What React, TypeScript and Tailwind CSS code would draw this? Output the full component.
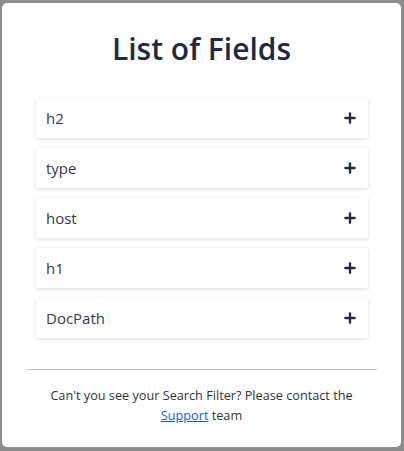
import { Plus } from "lucide-react";

const fields = ["h2", "type", "host", "h1", "DocPath"];

function FieldRow({ name }: { name: string }) {
  return (
    <div className="flex h-10 items-center justify-between bg-white pl-[10px] pr-[10px] shadow-[0_1px_4px_rgba(0,0,0,0.14)]">
      <span className="text-[15px] text-[#333a4d]">{name}</span>
      <Plus size={16} strokeWidth={3.5} className="text-[#1f2a44]" />
    </div>
  );
}

export default function App() {
  return (
    <div
      className="h-[451px] w-[404px] bg-[#8d8d8d] pl-[2px] pt-[3px]"
      style={{ fontFamily: '"Open Sans", sans-serif' }}
    >
      <div className="flex h-[444px] w-[399px] flex-col rounded-[5px] bg-white">
        <h1 className="mt-[26px] text-center text-[30px] font-semibold leading-[40px] text-[#1f2a44]">
          List of Fields
        </h1>
        <div className="ml-[34px] mr-[33px] mt-[29px] flex flex-col gap-[10px]">
          {fields.map((f) => (
            <FieldRow key={f} name={f} />
          ))}
        </div>
        <div className="mx-6 mt-[31px] border-t border-[#c4c4c4]" />
        <p className="mt-[16px] px-4 text-center text-[12.7px] leading-[19.5px] text-[#333]">
          Can't you see your Search Filter? Please contact the
          <br />
          <a href="#" className="text-[#1a56db] underline">
            Support
          </a>{" "}
          team
        </p>
      </div>
    </div>
  );
}
